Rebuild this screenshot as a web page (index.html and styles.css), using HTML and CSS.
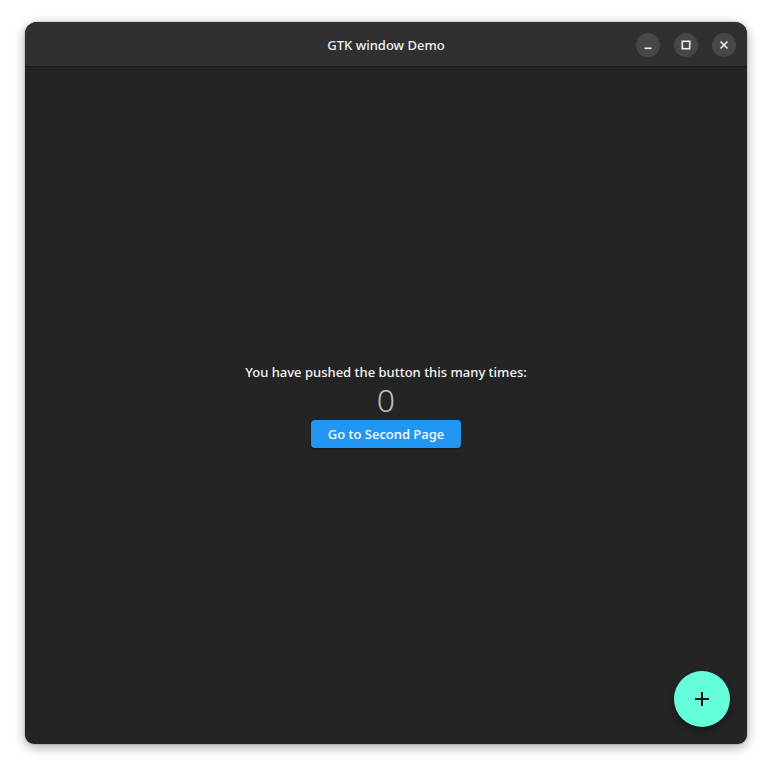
FILE: index.html
```html
<!DOCTYPE html>
<html>
<head>
<meta charset="utf-8">
<link rel="stylesheet" href="styles.css">
</head>
<body>
<div class="window">
  <header class="titlebar">
    <div class="title">GTK window Demo</div>
    <div class="controls">
      <span class="ctl"><svg width="10" height="10" viewBox="0 0 10 10"><rect x="1.5" y="7.5" width="7" height="1.6" fill="#eee"/></svg></span>
      <span class="ctl"><svg width="10" height="10" viewBox="0 0 10 10"><rect x="1.3" y="1.3" width="7.4" height="7.4" fill="none" stroke="#eee" stroke-width="1.6"/></svg></span>
      <span class="ctl"><svg width="10" height="10" viewBox="0 0 10 10"><path d="M1.5 1.5L8.5 8.5M8.5 1.5L1.5 8.5" stroke="#eee" stroke-width="1.6"/></svg></span>
    </div>
  </header>
  <main class="content">
    <div class="msg">You have pushed the button this many times:</div>
    <div class="count">0</div>
    <button class="btn">Go to Second Page</button>
    <button class="fab"><svg width="16" height="16" viewBox="0 0 16 16"><path d="M8 1V15M1 8H15" stroke="#111" stroke-width="2"/></svg></button>
  </main>
</div>
</body>
</html>
```
FILE: styles.css
```css
html, body { margin: 0; padding: 0; background: #fff; }
body { width: 772px; height: 772px; font-family: "Noto Sans", "Open Sans", sans-serif; }
.window {
  position: absolute; left: 25px; top: 22px; width: 722px; height: 722px;
  background: #242424; border-radius: 12px 12px 9px 9px; overflow: hidden;
  box-shadow: 0 3px 12px rgba(0,0,0,0.35), 0 0 0 1px rgba(0,0,0,0.08);
  display: flex; flex-direction: column;
}
.titlebar {
  height: 44px; background: #303030; border-bottom: 1px solid #1c1c1c;
  display: flex; align-items: center; justify-content: center; position: relative;
  flex: none;
}
.title { color: #f0f0f0; font-size: 13px; font-weight: 500; padding-top: 2px; }
.controls { position: absolute; right: 11px; top: 11px; display: flex; gap: 14px; }
.ctl {
  width: 24px; height: 24px; border-radius: 50%; background: #474747;
  display: flex; align-items: center; justify-content: center;
}
.content {
  flex: 1; position: relative; display: flex; flex-direction: column;
  align-items: center; justify-content: center; padding-top: 1px; padding-bottom: 2px;
}
.msg { color: #f5f5f5; font-size: 13px; line-height: 20px; font-weight: 500; }
.count { color: #bdbdbd; font-size: 32px; line-height: 36px; font-weight: 300; }
.btn {
  margin-top: 2px; background: #2196f3; color: #fff; border: none; border-radius: 4px;
  font-family: inherit; font-size: 13px; font-weight: 500; height: 28px; width: 150px; padding: 0;
  box-shadow: 0 1px 2px rgba(0,0,0,0.4);
}
.fab {
  position: absolute; right: 17px; bottom: 17px; width: 56px; height: 56px;
  border-radius: 50%; background: #64ffda; border: none; padding: 0;
  display: flex; align-items: center; justify-content: center;
  box-shadow: 0 3px 6px rgba(0,0,0,0.4);
}
```
